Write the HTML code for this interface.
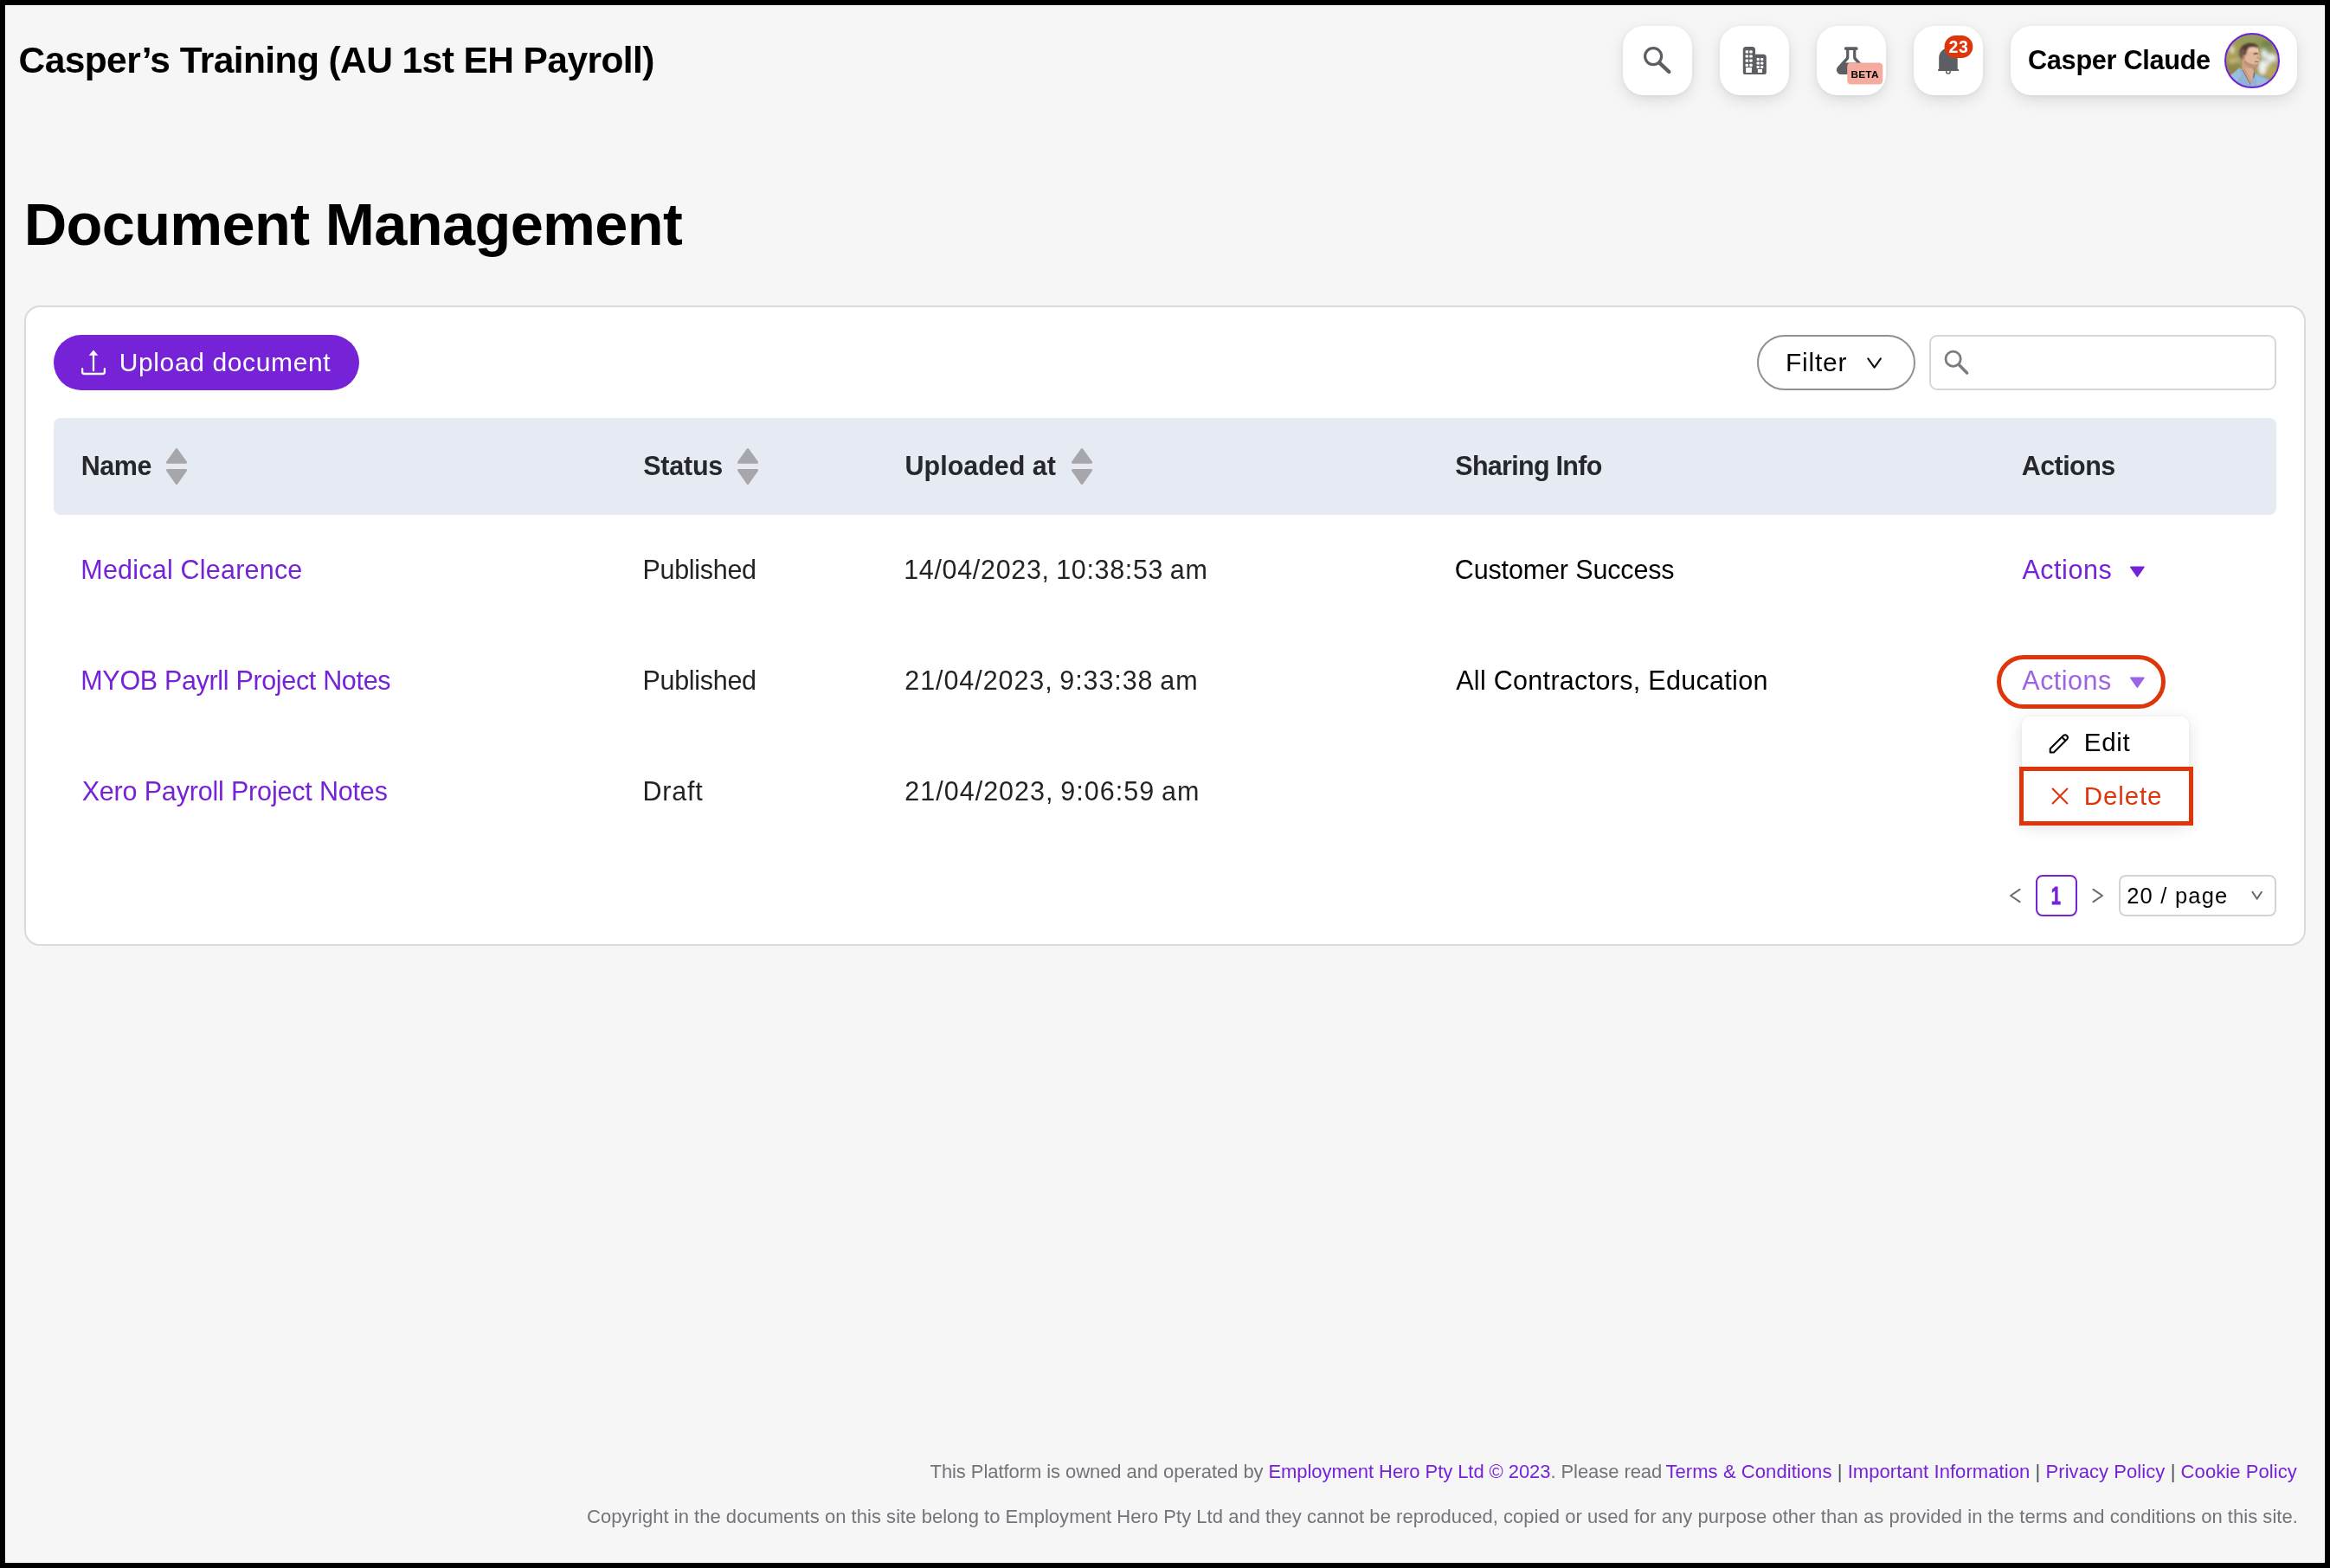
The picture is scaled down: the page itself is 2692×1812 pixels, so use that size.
<!DOCTYPE html>
<html lang="en">
<head>
<meta charset="utf-8">
<title>Document Management</title>
<style>
*{box-sizing:border-box;margin:0;padding:0}
html,body{width:2692px;height:1812px;overflow:hidden;background:#000}
body{font-family:"Liberation Sans",sans-serif;color:#000;position:relative}
.frame{position:absolute;left:6px;top:6px;width:2680px;height:1800px;background:#f6f6f6;border:1px solid #fff}
.root{position:absolute;left:0;top:0;width:2692px;height:1812px;will-change:transform}
.abs{position:absolute;white-space:nowrap;line-height:1}
a{color:#7622d7;text-decoration:none}
/* top bar */
.brand{font-weight:700;color:#000}
.ibtn{position:absolute;top:30px;width:80px;height:80px;border-radius:24px;background:#fff;box-shadow:0 6px 18px rgba(0,0,0,.11),0 1px 6px rgba(0,0,0,.06)}
.ibtn svg{position:absolute}
.user{position:absolute;left:2323px;top:30px;width:331px;height:80px;border-radius:24px;background:#fff;box-shadow:0 6px 18px rgba(0,0,0,.11),0 1px 6px rgba(0,0,0,.06)}
.uname{font-weight:700;color:#000}
.avatar{position:absolute;left:247px;top:8px;width:64px;height:64px}
.art{position:absolute;left:1px;top:1px;width:62px;height:62px;border-radius:50%;overflow:hidden}
.art svg{position:absolute;left:-1px;top:-1px}
.ring{position:absolute;left:0;top:0;width:64px;height:64px;border:2px solid #6f20d8;border-radius:50%}
h1.abs{font-weight:700;color:#000}
/* card */
.card{position:absolute;left:28px;top:353px;width:2636px;height:740px;background:#fff;border:2px solid #d9dadf;border-radius:18px}
.upload{position:absolute;left:62px;top:387px;width:353px;height:64px;border-radius:32px;background:#7622d7;color:#fff}
.filter{position:absolute;left:2030px;top:387px;width:183px;height:64px;border-radius:32px;background:#fff;border:2px solid #8f9096}
.search{position:absolute;left:2229px;top:387px;width:401px;height:64px;border-radius:9px;background:#fff;border:2px solid #d5d6db}
.thead{position:absolute;left:62px;top:483px;width:2568px;height:112px;border-radius:8px;background:#e6eaf3}
.th{font-weight:700;color:#26272b}
.sort{position:absolute;top:517px;width:26px;height:44px}
.dark{color:#222326}
.menu{position:absolute;left:2336px;top:828px;width:193px;height:124px;border-radius:9px;background:#fff;box-shadow:0 4px 18px rgba(0,0,0,.13),0 0 3px rgba(0,0,0,.05)}
.hl-pill{position:absolute;left:2307px;top:757px;width:195px;height:62px;border:5px solid #de350b;border-radius:31px}
.hl-box{position:absolute;left:2333px;top:886px;width:201px;height:68px;border:5px solid #de350b}
.pg{position:absolute;left:2352px;top:1011px;width:48px;height:48px;border:2px solid #7622d7;border-radius:8px;background:#fff}
.psel{position:absolute;left:2448px;top:1011px;width:182px;height:48px;border:2px solid #d3d4d9;border-radius:8px;background:#fff}
.foot{color:#737479}
.foot i{font-style:normal;color:#4f5055}
</style>
</head>
<body>
<div class="frame"></div>
<div class="root">

<div id="t-brand" class="abs brand" style="left:21.53px;top:48.80px;font-size:42.5px;letter-spacing:-0.580px">Casper’s Training (AU 1st EH Payroll)</div>

<div class="ibtn" id="b1" style="left:1875px"><svg width="80" height="80" viewBox="0 0 80 80"><circle cx="35.1" cy="35.1" r="9.5" fill="none" stroke="#5d5e63" stroke-width="3.2"/><path d="M42.6 42.8 L53.3 53" stroke="#5d5e63" stroke-width="4.4" stroke-linecap="round"/></svg></div>
<div class="ibtn" id="b2" style="left:1987px"><svg width="80" height="80" viewBox="0 0 80 80"><path d="M26.8 27.5a3.5 3.5 0 0 1 3.5-3.5h7.2a3.5 3.5 0 0 1 3.5 3.5v5.3h9.3a3.5 3.5 0 0 1 3.5 3.5v17.7a2 2 0 0 1-2 2h-23a2 2 0 0 1-2-2z" fill="#5d5e63"/><g fill="#fff"><rect x="29.6" y="28.3" width="3.4" height="3.1" rx=".7"/><rect x="29.6" y="33.5" width="3.4" height="3.1" rx=".7"/><rect x="29.6" y="38.6" width="3.4" height="3.1" rx=".7"/><rect x="29.6" y="43.8" width="3.4" height="3.1" rx=".7"/><rect x="34.3" y="28.3" width="3.4" height="3.1" rx=".7"/><rect x="34.3" y="33.5" width="3.4" height="3.1" rx=".7"/><rect x="34.3" y="38.6" width="3.4" height="3.1" rx=".7"/><rect x="34.3" y="43.8" width="3.4" height="3.1" rx=".7"/><rect x="42.6" y="37" width="3.2" height="3" rx=".7"/><rect x="42.6" y="41.6" width="3.2" height="3" rx=".7"/><rect x="42.6" y="46" width="3.2" height="3" rx=".7"/><rect x="47.1" y="37" width="3.2" height="3" rx=".7"/><rect x="47.1" y="41.6" width="3.2" height="3" rx=".7"/><rect x="47.1" y="46" width="3.2" height="3" rx=".7"/><rect x="30.1" y="48" width="6.8" height="6"/><rect x="43.9" y="50" width="5.1" height="4"/></g></svg></div>
<div class="ibtn" id="b3" style="left:2099px"><svg width="80" height="80" viewBox="0 0 80 80"><path fill="#5d5e63" d="M33.6 24.2h12.2a1.8 1.8 0 0 1 0 3.7h-.5v7.6c0 .6.2 1.1.6 1.5l9.3 10.2c2.9 3.2.7 8.8-3.9 8.8H28.1c-4.6 0-6.8-5.6-3.9-8.8l9.3-10.2c.4-.4.6-.9.6-1.5v-7.6h-.5a1.8 1.8 0 0 1 0-3.7z"/><path fill="#fff" d="M37.3 27.9h4.8v8.6c0 .9.3 1.7.9 2.4l3.3 3.6H33.1l3.3-3.6c.6-.7.9-1.5.9-2.4z"/><rect x="35.2" y="42.5" width="41" height="25" rx="4.2" fill="#f5ac9f"/><text x="55.6" y="59.7" font-family="Liberation Sans,sans-serif" font-weight="700" font-size="11.8" letter-spacing=".2" text-anchor="middle" fill="#000">BETA</text></svg></div>
<div class="ibtn" id="b4" style="left:2211px"><svg width="80" height="80" viewBox="0 0 80 80"><path fill="#5d5e63" d="M29.2 50V36.6c0-6 4.8-10.9 10.7-10.9s10.8 4.9 10.8 10.9V50h.8a.6.6 0 0 1 .6.6v.8a.6.6 0 0 1-.6.6H28.7a.6.6 0 0 1-.6-.6v-.8a.6.6 0 0 1 .6-.6z"/><circle cx="39.9" cy="52.8" r="2.3" fill="none" stroke="#5d5e63" stroke-width="1.5"/><rect x="35.5" y="11" width="32.8" height="26" rx="13" fill="#de350b"/><text x="51.9" y="30.9" font-family="Liberation Sans,sans-serif" font-weight="700" font-size="19.5" text-anchor="middle" fill="#fff" letter-spacing=".5">23</text></svg></div>
<div class="user"><div class="avatar" id="av"><div class="art"><svg width="64" height="64" viewBox="0 0 64 64"><g><rect width="64" height="64" fill="#9d9859"/><g style="filter:blur(2.1px)"><ellipse cx="30" cy="6" rx="24" ry="7" fill="#959b5b"/><ellipse cx="9" cy="40" rx="9" ry="12" fill="#918648"/><ellipse cx="8" cy="28" rx="7" ry="8" fill="#ab9c57"/><ellipse cx="49" cy="13" rx="8" ry="5" fill="#72854f"/><ellipse cx="40" cy="10" rx="5" ry="4" fill="#8a9658"/><ellipse cx="47" cy="24" rx="5" ry="6" fill="#e3ebf0"/><ellipse cx="55" cy="29" rx="5.5" ry="5" fill="#e8eef2"/><ellipse cx="51" cy="20" rx="3" ry="3" fill="#7d8f58"/><ellipse cx="44" cy="40" rx="5" ry="9" fill="#eef1f3"/><ellipse cx="50" cy="35" rx="3" ry="4" fill="#dfe6e6"/><ellipse cx="55" cy="45" rx="7" ry="8" fill="#b4a55c"/><ellipse cx="58" cy="37" rx="4" ry="4" fill="#a89f5c"/><ellipse cx="9" cy="19" rx="2.6" ry="4.8" fill="#ece6da"/><circle cx="8.8" cy="33" r="2.4" fill="#d6cd98"/><circle cx="15" cy="32" r="2.2" fill="#d3c6b0"/><ellipse cx="14" cy="13" rx="6" ry="4" fill="#a39c5a"/></g><g style="filter:blur(.75px)"><path d="M3 52 7 48.7 17 40.5 21 42.5 25 51 30 60 33 52 34.3 45.5 38 47.7 52 54 60 66H2z" fill="#8fb4d8"/><path d="M8 50 17 42l3 6-6 9z" fill="#a3c3e3" opacity=".7"/><path d="M36 49l12 5.5 6 9H38z" fill="#9cbde0" opacity=".7"/><path d="M30 60l.6 6h-1.5z" fill="#5d7ea6"/><path d="M20.5 31v11.5L25 51l5 9 3-8 1.3-6.5L33 40z" fill="#cf9f84"/><path d="M24 40l4 9 3.5 6 1.5-6.5-.5-7z" fill="#ddb197" opacity=".8"/><path d="M20.8 42.8 21.6 42.5 25.5 50.6 30.2 59.2 30 60 25 51z" fill="#33415c" opacity=".6"/><path d="M33.2 51.5 34.3 45.8 35.2 46.5 34 52.6z" fill="#2f3c56" opacity=".7"/><path d="M20 27.5c-1.2-8.5 3.5-13.5 10.5-13.5 5.5 0 8.6 2 9 5.5l.3 5.5 1.5 3.4-1.5 1.1.4 2.7-1 1.4.2 3.4c-.2 2.6-2.3 3.8-5.3 3.3-4-.7-9.5-3.2-12-8z" fill="#e0b69c"/><path d="M27 18c3.5-2.2 8-2.6 11.5-.8l.6 5c-3-1.2-7-1-10.5.3z" fill="#ecc8b0" opacity=".8"/><path d="M33.5 23.6c1.5-.9 3.5-1 5.2-.3l.2 2c-1.7-.4-3.5-.3-5 .3z" fill="#7a5545" opacity=".75"/><path d="M37.5 26.5l1.8.2 1.7 2.6-1.4 1-2-.5z" fill="#c9957c" opacity=".7"/><path d="M35 32.8c1.6-.5 3.2-.4 4.3.2l-.2 1.2c-1.3-.3-2.7-.2-4 .2z" fill="#9b6a58" opacity=".8"/><circle cx="21.5" cy="28.5" r="2.6" fill="#cf9278"/><path d="M22.5 34.5c3 3.5 7.5 5.7 11.5 6.2 2.5.3 4.4-.5 4.9-2.5l-.1-3c-1.4 1.5-3.9 1.8-6.9.9-3.5-1-6.5-3-9.4-5.6z" fill="#a87c65" opacity=".6"/></g><g style="filter:blur(1.1px)"><path d="M17.6 26.5c-1.4-7 2.5-13 9-14.3 5-.9 10.2 0 12 3.3l.6 2.3c-3-2-7.3-2.4-11.3-1.1-1.8 2.4-2.9 5.3-3.3 8.8l-2.8.5-1.2 4.5c-1.5-1-2.5-2.4-3-4z" fill="#523b30"/><path d="M18.5 27c-.5-3 .5-6 2.5-8.5l3 1c-1.5 2.5-2 5-2.2 7.5l-1.5 3z" fill="#8a6c5b" opacity=".7"/></g></g></svg></div><div class="ring"></div></div></div>

<h1 id="t-h1" class="abs h1" style="left:27.63px;top:225.90px;font-size:68.5px;letter-spacing:-0.634px">Document Management</h1>
<span id="t-uname" class="abs uname" style="left:2343.02px;top:54.66px;font-size:30.7px;letter-spacing:-0.311px">Casper Claude</span>

<div class="card"></div>
<div class="upload"><svg class="abs" style="left:0;top:0" width="80" height="64" viewBox="0 0 80 64"><path d="M33.1 39.2v3.5a2.3 2.3 0 0 0 2.3 2.3h21.2a2.3 2.3 0 0 0 2.3-2.3v-3.5M46 41.2V22" fill="none" stroke="#fff" stroke-width="2.3" stroke-linecap="round"/><path d="M46 17.6 51.3 23.8H40.7z" fill="#fff"/></svg></div>
<div class="filter"><svg class="abs" style="left:122px;top:22px" width="24" height="18" viewBox="0 0 24 18"><path d="M4.3 3.4 11.6 13.6 18.9 3.4" fill="none" stroke="#111" stroke-width="2.1" stroke-linecap="round" stroke-linejoin="round"/></svg></div>
<span id="t-upload" class="abs " style="left:137.67px;top:403.50px;font-size:30px;letter-spacing:0.632px;color:#fff">Upload document</span>
<span id="t-filter" class="abs " style="left:2063.00px;top:403.80px;font-size:30px;letter-spacing:0.753px">Filter</span>
<div class="search"><svg class="abs" style="left:12px;top:12px" width="40" height="40" viewBox="0 0 40 40"><circle cx="13.6" cy="13.7" r="8.6" fill="none" stroke="#7b7c81" stroke-width="2.8"/><path d="M20 20.3 29.6 30" stroke="#7b7c81" stroke-width="3.6" stroke-linecap="round"/></svg></div>

<div class="thead"></div>
<span id="t-thname" class="abs th" style="left:93.80px;top:522.90px;font-size:30.5px;letter-spacing:-0.476px">Name</span>
<svg class="sort" style="left:191px" viewBox="0 0 26 44"><path d="M13 2.5 23.6 17.3H2.5z M2.5 26.4h21.1L13 41.5z" fill="#a6a6ab" stroke="#a6a6ab" stroke-width="3" stroke-linejoin="round"/></svg>
<span id="t-thstatus" class="abs th" style="left:743.20px;top:522.90px;font-size:30.5px;letter-spacing:-0.221px">Status</span>
<svg class="sort" style="left:850.5px" viewBox="0 0 26 44"><path d="M13 2.5 23.6 17.3H2.5z M2.5 26.4h21.1L13 41.5z" fill="#a6a6ab" stroke="#a6a6ab" stroke-width="3" stroke-linejoin="round"/></svg>
<span id="t-thup" class="abs th" style="left:1045.59px;top:522.90px;font-size:30.5px;letter-spacing:-0.023px">Uploaded at</span>
<svg class="sort" style="left:1236.5px" viewBox="0 0 26 44"><path d="M13 2.5 23.6 17.3H2.5z M2.5 26.4h21.1L13 41.5z" fill="#a6a6ab" stroke="#a6a6ab" stroke-width="3" stroke-linejoin="round"/></svg>
<span id="t-thshare" class="abs th" style="left:1681.32px;top:522.90px;font-size:30.5px;letter-spacing:-0.718px">Sharing Info</span>
<span id="t-thact" class="abs th" style="left:2335.73px;top:522.90px;font-size:30.5px;letter-spacing:-0.560px">Actions</span>

<a id="t-r1name" class="abs " style="left:93.29px;top:642.90px;font-size:30.5px;letter-spacing:0.215px">Medical Clearence</a>
<span id="t-r1st" class="abs dark" style="left:742.50px;top:642.90px;font-size:30.5px;letter-spacing:-0.305px">Published</span>
<span id="t-r1date" class="abs dark" style="left:1044.21px;top:642.90px;font-size:30.5px;letter-spacing:0.666px;word-spacing:-1.6px">14/04/2023, 10:38:53 am</span>
<span id="t-r1share" class="abs " style="left:1680.82px;top:642.90px;font-size:30.5px;letter-spacing:-0.143px">Customer Success</span>
<a id="t-r1act" class="abs " style="left:2336.49px;top:642.90px;font-size:30.5px;letter-spacing:0.523px">Actions</a><svg class="abs" style="left:2459px;top:652.5px" width="20" height="16" viewBox="0 0 20 16"><path d="M2.8 2.4h15.1L10.35 13.1z" fill="#7622d7" stroke="#7622d7" stroke-width="1.6" stroke-linejoin="round"/></svg>

<a id="t-r2name" class="abs " style="left:93.29px;top:770.90px;font-size:30.5px;letter-spacing:-0.328px">MYOB Payrll Project Notes</a>
<span id="t-r2st" class="abs dark" style="left:742.50px;top:770.90px;font-size:30.5px;letter-spacing:-0.305px">Published</span>
<span id="t-r2date" class="abs dark" style="left:1045.36px;top:770.90px;font-size:30.5px;letter-spacing:0.913px;word-spacing:-1.6px">21/04/2023, 9:33:38 am</span>
<span id="t-r2share" class="abs " style="left:1682.17px;top:770.90px;font-size:30.5px;letter-spacing:0.305px">All Contractors, Education</span>
<a id="t-r2act" class="abs " style="left:2336.30px;top:770.90px;font-size:30.5px;letter-spacing:0.490px;color:#9d63e6">Actions</a><svg class="abs" style="left:2459px;top:780.5px" width="20" height="16" viewBox="0 0 20 16"><path d="M2.8 2.4h15.1L10.35 13.1z" fill="#9d63e6" stroke="#9d63e6" stroke-width="1.6" stroke-linejoin="round"/></svg>

<a id="t-r3name" class="abs " style="left:94.68px;top:898.90px;font-size:30.5px;letter-spacing:-0.178px">Xero Payroll Project Notes</a>
<span id="t-r3st" class="abs dark" style="left:742.50px;top:898.90px;font-size:30.5px;letter-spacing:0.762px">Draft</span>
<span id="t-r3date" class="abs dark" style="left:1045.36px;top:898.90px;font-size:30.5px;letter-spacing:0.999px;word-spacing:-1.6px">21/04/2023, 9:06:59 am</span>

<div class="menu"></div>
<span id="t-edit" class="abs " style="left:2407.84px;top:842.90px;font-size:29.5px;letter-spacing:0.706px">Edit</span>
<span id="t-delete" class="abs " style="left:2407.84px;top:904.90px;font-size:29.5px;letter-spacing:0.848px;color:#de350b">Delete</span>
<svg class="abs" style="left:2367px;top:846px" width="26" height="26" viewBox="0 0 26 26"><path d="M1.7 19.3 15.2 5.8 19.4 10 5.9 23.5H1.7z M15.2 5.8l1.9-1.9a3 3 0 0 1 4.2 4.2L19.4 10" fill="none" stroke="#000" stroke-width="2" stroke-linejoin="round" stroke-linecap="round"/></svg>
<svg class="abs" style="left:2369px;top:909px" width="22" height="22" viewBox="0 0 22 22"><path d="M2.6 2.6 19.4 19.4M19.4 2.6 2.6 19.4" stroke="#de350b" stroke-width="2.1" stroke-linecap="round"/></svg>
<div class="hl-pill"></div>
<div class="hl-box"></div>

<svg class="abs" style="left:2320px;top:1023px" width="16" height="24" viewBox="0 0 16 24"><path d="M13.5 4.8 3 12l10.5 7.2" fill="none" stroke="#6c6d72" stroke-width="2.1" stroke-linecap="round" stroke-linejoin="round"/></svg><svg class="abs" style="left:2416px;top:1023px" width="16" height="24" viewBox="0 0 16 24"><path d="M2.5 4.8 13 12 2.5 19.2" fill="none" stroke="#6c6d72" stroke-width="2.1" stroke-linecap="round" stroke-linejoin="round"/></svg>
<div class="pg"></div>
<span id="t-pg" class="abs " style="left:2367.05px;top:1020.30px;font-size:29.5px;letter-spacing:0.000px;font-weight:700;color:#7622d7;transform:scaleX(.68);transform-origin:50% 50%;-webkit-text-stroke:.8px #7622d7">1</span>
<div class="psel"><svg class="abs" style="left:148px;top:14px" width="20" height="18" viewBox="0 0 20 18"><path d="M4.4 3.8 9.65 11.7 14.9 3.8" fill="none" stroke="#66676c" stroke-width="2" stroke-linecap="round" stroke-linejoin="round"/></svg></div>

<div id="t-foot1" class="abs foot" style="left:1074.52px;top:1689.80px;font-size:22px;letter-spacing:-0.071px">This Platform is owned and operated by <a>Employment Hero Pty Ltd © 2023</a>. Please read</div>
<div id="t-foot1b" class="abs foot" style="left:1924.44px;top:1689.80px;font-size:22px;letter-spacing:0.073px"><a>Terms &amp; Conditions</a> <i>|</i> <a>Important Information</a> <i>|</i> <a>Privacy Policy</a> <i>|</i> <a>Cookie Policy</a></div>
<span id="t-psel" class="abs " style="left:2457.24px;top:1022.90px;font-size:25.5px;letter-spacing:1.208px">20 / page</span>
<div id="t-foot2" class="abs foot" style="left:678.12px;top:1741.60px;font-size:22px;letter-spacing:0.033px">Copyright in the documents on this site belong to Employment Hero Pty Ltd and they cannot be reproduced, copied or used for any purpose other than as provided in the terms and conditions on this site.</div>
</div>
</body>
</html>
